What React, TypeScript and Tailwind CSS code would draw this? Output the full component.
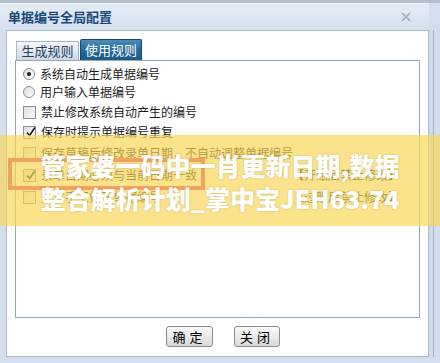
import React from 'react'

const cjk = "font-['Noto_Sans_CJK_SC','Liberation_Sans',sans-serif]"

function Radio({ checked }: { checked?: boolean }) {
  return (
    <span className="flex h-[12px] w-[12px] shrink-0 items-center justify-center rounded-full border border-[#8a8f96] bg-gradient-to-br from-[#d9dde2] to-[#fdfdfd]">
      {checked && <span className="h-[4px] w-[4px] rounded-full bg-[#1d1d1d]" />}
    </span>
  )
}

function Check({ checked }: { checked?: boolean }) {
  return (
    <span className="relative flex h-[13px] w-[13px] shrink-0 items-center justify-center border border-[#8a8f96] bg-gradient-to-br from-[#dcdfe3] to-[#fbfbfb]">
      {checked && (
        <svg viewBox="0 0 12 12" className="absolute -top-[1px] left-[1px] h-[12px] w-[12px]">
          <path d="M2 6.5 L4.6 9.5 L10 1.5" fill="none" stroke="#1a1a1a" strokeWidth="1.6" />
        </svg>
      )}
    </span>
  )
}

function Row({
  kind,
  checked,
  label,
  note,
  mt,
}: {
  kind: 'radio' | 'check'
  checked?: boolean
  label: string
  note?: string
  mt: string
}) {
  return (
    <div className={`flex h-[18px] items-center pl-[7px] pr-[19px] ${mt}`}>
      {kind === 'radio' ? <Radio checked={checked} /> : <Check checked={checked} />}
      <span className="ml-[5px] text-[12px] leading-none text-[#1a1a1a]">{label}</span>
      {note && <span className="ml-auto text-[12px] leading-none text-[#1a1a1a]">{note}</span>}
    </div>
  )
}

export default function App() {
  return (
    <div className={`relative h-[363px] w-[440px] overflow-hidden bg-[#d3dfee] ${cjk}`}>
      <div className="h-[3px] bg-[#b4bfcb]" />
      <div className="flex w-[434px]">
        <div className="flex w-[429px] flex-col">
          <div className="flex h-[27px] items-center justify-between bg-gradient-to-b from-[#e4ecf6] to-[#d5e1ef] pl-[8px] pr-[18px]">
            <span className="text-[13px] font-bold text-[#18457a]">单据编号全局配置</span>
            <svg viewBox="0 0 10 10" className="h-[10px] w-[10px]">
              <path d="M1 1 L9 9 M9 1 L1 9" stroke="#9aa6b3" strokeWidth="1.3" />
              <path d="M2.5 1 L9 7.5 M7.5 1 L1 7.5" stroke="#c3ccd6" strokeWidth="0.8" />
            </svg>
          </div>
          <div className="ml-[6px] flex h-[327px] flex-col border border-[#a7bcd4] bg-white px-[8px] pt-[8px]">
            <div className="flex h-[21px] items-end pl-[1px]">
              <div className="flex h-[19px] w-[63px] items-center justify-center border border-b-0 border-[#a6b6c6] bg-gradient-to-b from-[#f6f8fa] to-[#cdd8e2] text-[13px] text-[#23415e]">
                生成规则
              </div>
              <div className="ml-px flex h-[21px] w-[62px] items-center justify-center rounded-t-[2px] border border-b-0 border-[#0f4a73] bg-gradient-to-b from-[#4a8cbc] via-[#24699a] to-[#1a5a85] text-[13px] text-white">
                使用规则
              </div>
            </div>
            <div className="flex h-[258px] flex-col border border-[#8fa9c1] bg-white">
              <Row kind="radio" checked label="系统自动生成单据编号" mt="mt-[4px]" />
              <Row kind="radio" label="用户输入单据编号" mt="mt-0" />
              <Row kind="check" label="禁止修改系统自动产生的编号" mt="mt-[2px]" />
              <Row kind="check" checked label="保存时提示单据编号重复" mt="mt-[2px]" />
              <Row kind="check" label="保存草稿后修改录单日期，不自动调整单据编号" mt="mt-[3px]" />
              <Row kind="check" checked label="录单日期必须与当前日期一致" note="【开账后禁止修改】" mt="mt-[4px]" />
              <Row kind="check" label="允许手工修改单据编号" note="【过账后禁止修改】" mt="mt-[4px]" />
            </div>
            <div className="mt-[8px] flex gap-[21px] pl-[151px]">
              <button className="h-[21px] w-[47px] rounded-[3px] border border-[#8d8d8d] bg-gradient-to-b from-[#fbfbfb] to-[#d9d9d9] text-[13px] leading-none tracking-[4px] text-black">
                确定
              </button>
              <button className="h-[21px] w-[46px] rounded-[3px] border border-[#8d8d8d] bg-gradient-to-b from-[#fbfbfb] to-[#d9d9d9] text-[13px] leading-none tracking-[4px] text-black">
                关闭
              </button>
            </div>
          </div>
        </div>
        <div className="mt-[27px] w-[5px] border-r border-[#9fb2c6] bg-[#cfdcec]" />
      </div>

      <div className="absolute left-0 top-[135px] h-[91px] w-full bg-[rgba(249,213,85,0.68)]" />
      <div className="absolute left-[8px] top-[158px] h-[32px] w-[197px] border-[4px] border-[#f2a25c]" />
      <div className="absolute left-0 top-[149px] w-full text-center text-[25px] font-black leading-[33px] text-white [text-shadow:0_0_2px_rgba(90,70,20,0.3)]">
        <div>管家婆一码中一肖更新日期,数据</div>
        <div>整合解析计划_掌中宝JEH63.74</div>
      </div>
    </div>
  )
}
